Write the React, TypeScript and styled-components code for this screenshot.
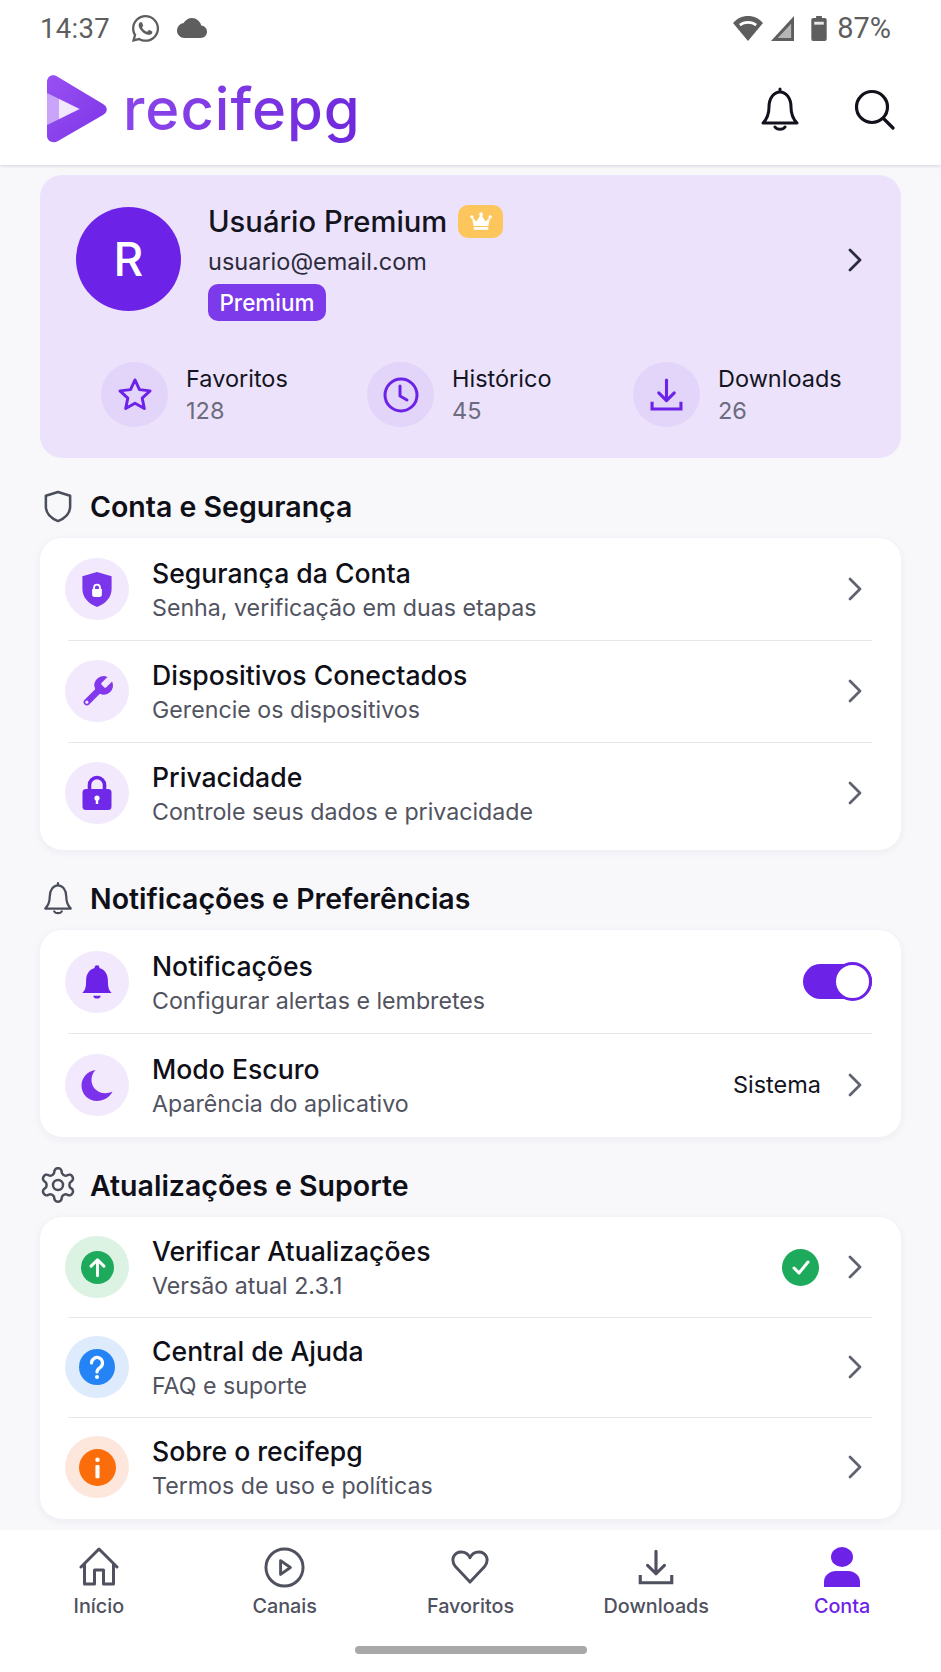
import React from "react";
import styled, { createGlobalStyle } from "styled-components";
import { FaWhatsapp } from "react-icons/fa";
import { MdCloud } from "react-icons/md";

const PURPLE = "#6d22e8";

const GlobalStyle = createGlobalStyle`
  html, body {
    margin: 0;
    padding: 0;
    background: #f8f8fb;
    font-family: "Inter", "Liberation Sans", sans-serif;
  }
  * { box-sizing: border-box; }
`;

const Chevron = ({ color = "#5f6370" }: { color?: string }) => (
  <ChevronSvg viewBox="0 0 14 24" fill="none" stroke={color} strokeWidth="2.8" strokeLinecap="round" strokeLinejoin="round">
    <path d="M2 2l10 10L2 22" />
  </ChevronSvg>
);

const BellOutline = () => (
  <svg viewBox="0 0 40 44" width="100%" height="100%" fill="none" stroke="currentColor" strokeWidth="3" strokeLinecap="round" strokeLinejoin="round">
    <path d="M20 2v3M3 36c4-4 6-8 6-16 0-9 5-15 11-15s11 6 11 15c0 8 2 12 6 16zM15 40c2 3 8 3 10 0" />
  </svg>
);

const SectionBellIcon = () => (
  <SectionBell>
    <BellOutline />
  </SectionBell>
);

const ShieldOutline = () => (
  <svg viewBox="0 0 30 34" width="30" height="33" fill="none" stroke="currentColor" strokeWidth="2.6" strokeLinejoin="round">
    <path d="M15 2l12.5 4v11c0 7-5 12-12.5 15C7.5 29 2.5 24 2.5 17V6z" />
  </svg>
);

const GearOutline = () => (
  <GearSvg viewBox="0 0 24 24" fill="none" stroke="currentColor" strokeWidth="1.5" strokeLinejoin="round" strokeLinecap="round">
    <path d="M12.22 2h-.44a2 2 0 0 0-2 2v.18a2 2 0 0 1-1 1.73l-.43.25a2 2 0 0 1-2 0l-.15-.08a2 2 0 0 0-2.73.73l-.22.38a2 2 0 0 0 .73 2.73l.15.1a2 2 0 0 1 1 1.72v.51a2 2 0 0 1-1 1.74l-.15.09a2 2 0 0 0-.73 2.73l.22.38a2 2 0 0 0 2.73.73l.15-.08a2 2 0 0 1 2 0l.43.25a2 2 0 0 1 1 1.73V20a2 2 0 0 0 2 2h.44a2 2 0 0 0 2-2v-.18a2 2 0 0 1 1-1.73l.43-.25a2 2 0 0 1 2 0l.15.08a2 2 0 0 0 2.73-.73l.22-.39a2 2 0 0 0-.73-2.73l-.15-.08a2 2 0 0 1-1-1.74v-.5a2 2 0 0 1 1-1.74l.15-.09a2 2 0 0 0 .73-2.73l-.22-.38a2 2 0 0 0-2.73-.73l-.15.08a2 2 0 0 1-2 0l-.43-.25a2 2 0 0 1-1-1.73V4a2 2 0 0 0-2-2z" />
    <circle cx="12" cy="12" r="3" />
  </GearSvg>
);

const ShieldLock = () => (
  <svg viewBox="0 0 32 38" width="32" height="37">
    <path fill="#7b35ea" d="M16 1l15 4.5v13C31 27 25 33.5 16 37 7 33.5 1 27 1 18.5v-13z" />
    <path fill="#fff" d="M12 17a4 4 0 0 1 8 0v1.5h1v6c0 1.3-.9 2.3-2.2 2.3h-5.6c-1.3 0-2.2-1-2.2-2.3v-6h1zm2 1.5h4V17a2 2 0 0 0-4 0z" />
  </svg>
);

const WrenchFilled = () => (
  <svg viewBox="0 0 24 24" width="37" height="37">
    <path fill="#8438ee" d="M14.7 6.3a1 1 0 0 0 0 1.4l1.6 1.6a1 1 0 0 0 1.4 0l3.77-3.77a6 6 0 0 1-7.94 7.94l-6.91 6.91a2.12 2.12 0 0 1-3-3l6.91-6.91a6 6 0 0 1 7.94-7.94z" />
    <circle cx="5.1" cy="18.9" r="1" fill="#f3eafd" />
  </svg>
);

const LockFilled = () => (
  <svg viewBox="0 0 30 36" width="30" height="36">
    <path fill="none" stroke="#6d22e8" strokeWidth="3.6" d="M7.5 16V10a7.5 7.5 0 0 1 15 0v6" />
    <rect x="0.5" y="14" width="29" height="21" rx="3.5" fill="#7029e9" />
    <circle cx="15" cy="23" r="2.6" fill="#fff" />
    <rect x="13.8" y="23" width="2.4" height="6" fill="#fff" />
  </svg>
);

const BellFilled = () => (
  <svg viewBox="0 0 32 38" width="32" height="36">
    <circle cx="16" cy="4" r="2.6" fill={PURPLE} />
    <path fill={PURPLE} d="M0.5 30.5c3-2.5 4-6 4-13C4.5 9.5 9.5 4 16 4s11.5 5.5 11.5 13.5c0 7 1 10.5 4 13z" />
    <path fill={PURPLE} d="M12 33.5h8c-.5 4-7.5 4-8 0z" />
  </svg>
);

const MoonFilled = () => (
  <svg viewBox="0 0 32 32" width="32" height="32">
    <path fill="#7c32ea" d="M14.5 1C9 7 9.5 15 14 20c4.5 4.5 11.5 5.5 17.5 2.5C28.5 28.5 22.5 32 16 32 7 32 .5 25 .5 16.5.5 9 6.5 2 14.5 1z" />
  </svg>
);

const BadgeGlyph = ({ color, size, kind }: { color: string; size: number; kind: "up" | "help" | "info" }) => (
  <svg viewBox="0 0 36 36" width={size} height={size}>
    <circle cx="18" cy="18" r="18" fill={color} />
    {kind === "up" && (
      <path d="M18 27V10M11 16.5L18 9.5l7 7" fill="none" stroke="#fff" strokeWidth="3.2" strokeLinecap="round" strokeLinejoin="round" />
    )}
    {kind === "help" && (
      <>
        <path d="M12.5 14a5.5 5.5 0 1 1 8.5 4.6c-2 1.3-3 2.2-3 4.4" fill="none" stroke="#fff" strokeWidth="3.2" strokeLinecap="round" />
        <circle cx="18" cy="28" r="2" fill="#fff" />
      </>
    )}
    {kind === "info" && (
      <>
        <circle cx="18" cy="10.5" r="2.2" fill="#fff" />
        <rect x="16" y="15.5" width="4" height="13" rx="1" fill="#fff" />
      </>
    )}
  </svg>
);

const StarOutline = () => (
  <svg viewBox="0 0 36 36" width="36" height="35" fill="none" stroke={PURPLE} strokeWidth="3" strokeLinejoin="round">
    <path d="M18 3l4.6 10 10.9 1.3-8.1 7.4 2.2 10.8L18 27l-9.6 5.5 2.2-10.8L2.5 14.3 13.4 13z" />
  </svg>
);

const ClockOutline = () => (
  <svg viewBox="0 0 36 36" width="36" height="36" fill="none" stroke={PURPLE} strokeWidth="3" strokeLinecap="round" strokeLinejoin="round">
    <circle cx="18" cy="18" r="16" />
    <path d="M17 9v10l7 4" />
  </svg>
);

const TrayDownload = ({ size, color, weight }: { size: number; color: string; weight: number }) => (
  <svg viewBox="0 0 32 32" width={size} height={size} fill="none" stroke={color} strokeWidth={weight} strokeLinecap="round">
    <path d="M16 2v20M8.5 14.5L16 22l7.5-7.5" strokeLinejoin="round" />
    <path d="M2 23v7h28v-7" strokeLinecap="butt" />
  </svg>
);

const HomeNav = () => (
  <svg viewBox="0 0 40 40" width="40" height="40" fill="none" stroke="currentColor" strokeWidth="3" strokeLinecap="round" strokeLinejoin="round">
    <path d="M2 20L20 2l18 18M5.5 17v20h10V23h9v14h10V17" />
  </svg>
);

const PlayNav = () => (
  <svg viewBox="0 0 42 42" width="41" height="41" fill="none" stroke="currentColor" strokeWidth="3" strokeLinejoin="round">
    <circle cx="21" cy="21" r="19" />
    <path d="M17 14l10 7-10 7z" />
  </svg>
);

const HeartNav = () => (
  <svg viewBox="0 0 40 36" width="40" height="35" fill="none" stroke="currentColor" strokeWidth="3" strokeLinejoin="round">
    <path d="M20 33L5 17C-.5 10 3.5 2 11 2c4.5 0 7.5 2.5 9 6 1.5-3.5 4.5-6 9-6 7.5 0 11.5 8 6 15z" />
  </svg>
);

const PersonNav = () => (
  <svg viewBox="0 0 40 40" width="40" height="40" fill={PURPLE}>
    <ellipse cx="20" cy="10" rx="11" ry="10" />
    <path d="M2 40v-5c0-7 6-11 12-11h12c6 0 12 4 12 11v5z" />
  </svg>
);

const WifiIcon = () => (
  <svg viewBox="0 0 30 25" width="30" height="25">
    <path fill="#5e5e5e" d="M15 25L0 7C4 2.5 9 0 15 0s11 2.5 15 7z" />
    <path fill="#fff" d="M6 8c2.5-2 5.5-3 9-3s6.500 1 9 3l-1.800 2.200C20 8.600 17.600 7.800 15 7.800s-5 .8-7.200 2.400z" />
  </svg>
);

const SignalIcon = () => (
  <svg viewBox="0 0 24 26" width="23" height="25">
    <path fill="#5e5e5e" d="M24 0v26H0z" />
    <path fill="#fff" d="M21 8v15H7z" opacity="0.55" />
  </svg>
);

const BatteryIcon = () => (
  <BatteryBox>
    <svg viewBox="0 0 16 26" width="16" height="25">
      <rect x="5" y="0" width="6" height="3" fill="#5e5e5e" />
      <rect x="0" y="2" width="16" height="24" rx="2" fill="#5e5e5e" />
      <rect x="3" y="6" width="10" height="3" fill="#e8e8e8" />
    </svg>
  </BatteryBox>
);

const LogoMark = () => (
  <svg viewBox="0 0 60 68" width="60" height="68">
    <defs>
      <linearGradient id="logoFill" x1="0" y1="0" x2="1" y2="1">
        <stop offset="0" stopColor="#9a50f2" />
        <stop offset="1" stopColor="#7a35e6" />
      </linearGradient>
    </defs>
    <path fill="url(#logoFill)" d="M0 7c0-6 6-9 11-5l45 27c5 3 5 8 0 11L11 66c-5 3-11 0-11-5z" />
    <path fill="#c9a4f8" d="M0 18l33 16L0 50z" />
    <path fill="#f1e8fe" d="M12 24l20 10-20 10z" />
  </svg>
);

const CrownGlyph = () => (
  <svg viewBox="0 0 24 20" width="22" height="19" fill="#fff">
    <path d="M2 5l5 5 5-8 5 8 5-5-2 10H4z" />
    <rect x="4" y="16" width="16" height="3" rx="1" />
    <circle cx="12" cy="2" r="2" />
    <circle cx="2" cy="5" r="1.8" />
    <circle cx="22" cy="5" r="1.8" />
  </svg>
);

type RowData = {
  title: string;
  sub: string;
  icon: React.ReactNode;
  tint?: string;
  right?: "toggle" | "sistema" | "check";
};

const sections: { name: string; icon: React.ReactNode; rowH: number; pad: number; rows: RowData[] }[] = [
  {
    name: "Conta e Segurança",
    icon: <ShieldOutline />,
    rowH: 102,
    pad: 6,
    rows: [
      { title: "Segurança da Conta", sub: "Senha, verificação em duas etapas", icon: <ShieldLock /> },
      { title: "Dispositivos Conectados", sub: "Gerencie os dispositivos", icon: <WrenchFilled /> },
      { title: "Privacidade", sub: "Controle seus dados e privacidade", icon: <LockFilled /> },
    ],
  },
  {
    name: "Notificações e Preferências",
    icon: <SectionBellIcon />,
    rowH: 103,
    pad: 1,
    rows: [
      { title: "Notificações", sub: "Configurar alertas e lembretes", icon: <BellFilled />, right: "toggle" },
      { title: "Modo Escuro", sub: "Aparência do aplicativo", icon: <MoonFilled />, right: "sistema" },
    ],
  },
  {
    name: "Atualizações e Suporte",
    icon: <GearOutline />,
    rowH: 100,
    pad: 2,
    rows: [
      {
        title: "Verificar Atualizações",
        sub: "Versão atual 2.3.1",
        icon: <BadgeGlyph color="#1eaa5c" size={33} kind="up" />,
        tint: "#dcf3e3",
        right: "check",
      },
      {
        title: "Central de Ajuda",
        sub: "FAQ e suporte",
        icon: <BadgeGlyph color="#2584f5" size={36} kind="help" />,
        tint: "#deebfd",
      },
      {
        title: "Sobre o recifepg",
        sub: "Termos de uso e políticas",
        icon: <BadgeGlyph color="#fb6d0b" size={37} kind="info" />,
        tint: "#fde7dc",
      },
    ],
  },
];

const stats = [
  { label: "Favoritos", value: "128", icon: <StarOutline /> },
  { label: "Histórico", value: "45", icon: <ClockOutline /> },
  { label: "Downloads", value: "26", icon: <TrayDownload size={33} color={PURPLE} weight={3} /> },
];

const navItems = [
  { label: "Início", icon: <HomeNav /> },
  { label: "Canais", icon: <PlayNav /> },
  { label: "Favoritos", icon: <HeartNav /> },
  { label: "Downloads", icon: <TrayDownload size={36} color="currentColor" weight={2.8} /> },
  { label: "Conta", icon: <PersonNav />, active: true },
];

const RowRight = ({ kind }: { kind?: RowData["right"] }) => {
  if (kind === "toggle") {
    return (
      <Toggle>
        <Knob />
      </Toggle>
    );
  }
  return (
    <RightGroup>
      {kind === "sistema" && <RightLabel>Sistema</RightLabel>}
      {kind === "check" && (
        <CheckDot>
          <svg viewBox="0 0 24 24" width="24" height="24" fill="none" stroke="#fff" strokeWidth="3" strokeLinecap="round" strokeLinejoin="round">
            <path d="M5 13l5 5 9-11" />
          </svg>
        </CheckDot>
      )}
      <Chevron />
    </RightGroup>
  );
};

export default function App() {
  return (
    <Page>
      <GlobalStyle />
      <TopArea>
        <StatusBar>
          <StatusLeft>
            <StatusText>14:37</StatusText>
            <FaWhatsapp size={31} color="#5e5e5e" />
            <MdCloud size={30} color="#5e5e5e" />
          </StatusLeft>
          <StatusRight>
            <WifiIcon />
            <SignalIcon />
            <BatteryIcon />
            <BatteryText>87%</BatteryText>
          </StatusRight>
        </StatusBar>
        <Header>
          <Brand>
            <LogoMark />
            <BrandName>recifepg</BrandName>
          </Brand>
          <HeaderActions>
            <HeaderBell>
              <BellOutline />
            </HeaderBell>
            <svg viewBox="0 0 41 41" width="41" height="41" fill="none" stroke="#12121c" strokeWidth="3.2" strokeLinecap="round">
              <circle cx="18" cy="18" r="15.5" />
              <path d="M29.5 29.5L39 39" />
            </svg>
          </HeaderActions>
        </Header>
      </TopArea>

      <Main>
        <ProfileCard>
          <ProfileTop>
            <Avatar>R</Avatar>
            <ProfileInfo>
              <NameRow>
                <Name>Usuário Premium</Name>
                <CrownBadge>
                  <CrownGlyph />
                </CrownBadge>
              </NameRow>
              <Email>usuario@email.com</Email>
              <PlanTag>Premium</PlanTag>
            </ProfileInfo>
            <ProfileChevron>
              <Chevron color="#2b2b3d" />
            </ProfileChevron>
          </ProfileTop>
          <StatsRow>
            {stats.map((s) => (
              <Stat key={s.label}>
                <StatCircle>{s.icon}</StatCircle>
                <div>
                  <StatLabel>{s.label}</StatLabel>
                  <StatValue>{s.value}</StatValue>
                </div>
              </Stat>
            ))}
          </StatsRow>
        </ProfileCard>

        {sections.map((sec) => (
          <Section key={sec.name}>
            <SectionHead>
              <SectionIcon>{sec.icon}</SectionIcon>
              <SectionTitle>{sec.name}</SectionTitle>
            </SectionHead>
            <Card $pad={sec.pad}>
              {sec.rows.map((r) => (
                <Row key={r.title} $h={sec.rowH}>
                  <IconCircle $tint={r.tint}>{r.icon}</IconCircle>
                  <RowText>
                    <RowTitle>{r.title}</RowTitle>
                    <RowSub>{r.sub}</RowSub>
                  </RowText>
                  <RowRight kind={r.right} />
                </Row>
              ))}
            </Card>
          </Section>
        ))}
      </Main>

      <BottomNav>
        <NavRow>
          {navItems.map((n) => (
            <NavItem key={n.label} $active={n.active}>
              <NavIcon>{n.icon}</NavIcon>
              <span>{n.label}</span>
            </NavItem>
          ))}
        </NavRow>
        <HomeBar />
      </BottomNav>
    </Page>
  );
}

const Page = styled.div`
  width: 941px;
  height: 1672px;
  display: flex;
  flex-direction: column;
  overflow: hidden;
  background: #f8f8fb;
`;

const TopArea = styled.div`
  height: 165px;
  flex: none;
  background: #fff;
  box-shadow: 0 1px 3px rgba(30, 30, 60, 0.16);
  position: relative;
  z-index: 1;
`;

const StatusBar = styled.div`
  height: 56px;
  padding: 0 50px 0 40px;
  display: flex;
  align-items: center;
  justify-content: space-between;
`;

const StatusLeft = styled.div`
  display: flex;
  align-items: center;
  gap: 16px;
`;

const StatusRight = styled.div`
  display: flex;
  align-items: center;
  gap: 8px;
`;

const StatusText = styled.span`
  width: 74px;
  font-family: "Roboto", "Liberation Sans", sans-serif;
  font-size: 27.5px;
  color: #5e5e5e;
  letter-spacing: 0.3px;
`;

const BatteryBox = styled.span`
  margin-left: 9px;
  display: flex;
`;

const BatteryText = styled.span`
  margin-left: 2px;
  font-family: "Roboto", "Liberation Sans", sans-serif;
  font-size: 29px;
  color: #5e5e5e;
`;

const Header = styled.div`
  height: 109px;
  padding: 0 46px 3px 47px;
  display: flex;
  align-items: center;
  justify-content: space-between;
`;

const Brand = styled.div`
  display: flex;
  align-items: center;
  gap: 16px;
`;

const BrandName = styled.span`
  font-size: 58px;
  font-weight: 500;
  letter-spacing: 1px;
  line-height: 68px;
  background: linear-gradient(90deg, #8a46ea, #6f28dc);
  -webkit-background-clip: text;
  background-clip: text;
  color: transparent;
`;

const HeaderActions = styled.div`
  display: flex;
  align-items: center;
  gap: 54px;
`;

const HeaderBell = styled.div`
  width: 40px;
  height: 44px;
  color: #12121c;
`;

const SectionBell = styled.div`
  width: 30px;
  height: 34px;
`;

const GearSvg = styled.svg`
  width: 40px;
  height: 40px;
  flex: none;
`;

const Main = styled.main`
  flex: 1;
  min-height: 0;
  padding: 10px 40px 0;
`;

const ProfileCard = styled.section`
  height: 283px;
  padding: 29px 39px 0 36px;
  border-radius: 22px;
  background: #ece2fb;
`;

const ProfileTop = styled.div`
  display: flex;
  align-items: flex-start;
`;

const Avatar = styled.div`
  width: 105px;
  height: 104px;
  margin-top: 3px;
  flex: none;
  border-radius: 50%;
  background: #6d22e8;
  color: #fff;
  font-size: 46px;
  font-weight: 500;
  display: flex;
  align-items: center;
  justify-content: center;
`;

const ProfileInfo = styled.div`
  margin-left: 27px;
  flex: 1;
`;

const NameRow = styled.div`
  display: flex;
  align-items: center;
  gap: 11px;
  height: 34px;
`;

const Name = styled.span`
  font-size: 29.2px;
  font-weight: 500;
  color: #14141f;
`;

const CrownBadge = styled.span`
  width: 45px;
  height: 33px;
  border-radius: 10px;
  background: #fcc65c;
  display: flex;
  align-items: center;
  justify-content: center;
`;

const Email = styled.div`
  margin-top: 8px;
  font-size: 23.5px;
  line-height: 32px;
  color: #2c2c3c;
`;

const PlanTag = styled.div`
  margin-top: 6px;
  width: 118px;
  height: 37px;
  border-radius: 10px;
  background: #7c3aea;
  color: #fff;
  font-size: 22.5px;
  font-weight: 500;
  display: flex;
  align-items: center;
  justify-content: center;
`;

const ProfileChevron = styled.div`
  align-self: center;
  margin-bottom: 5px;
  display: flex;
`;

const StatsRow = styled.div`
  margin-top: 41px;
  padding-left: 25px;
  display: grid;
  grid-template-columns: repeat(3, 266px);
`;

const Stat = styled.div`
  display: flex;
  align-items: center;
  gap: 18px;
`;

const StatCircle = styled.div`
  width: 67px;
  height: 65px;
  flex: none;
  border-radius: 50%;
  background: #e2d5f9;
  display: flex;
  align-items: center;
  justify-content: center;
`;

const StatLabel = styled.div`
  font-size: 23.5px;
  line-height: 32px;
  color: #14141f;
`;

const StatValue = styled.div`
  font-size: 23.5px;
  line-height: 32px;
  color: #6c6c7e;
`;

const Section = styled.section`
  margin-top: 28px;
`;

const SectionHead = styled.div`
  height: 40px;
  margin-bottom: 12px;
  padding-left: 3px;
  display: flex;
  align-items: center;
  gap: 17px;
`;

const SectionIcon = styled.div`
  width: 30px;
  display: flex;
  justify-content: center;
  color: #4a4d5a;
`;

const SectionTitle = styled.h2`
  margin: 0;
  font-size: 28.5px;
  font-weight: 600;
  color: #0f0f18;
`;

const Card = styled.div<{ $pad: number }>`
  padding-bottom: ${(p) => p.$pad}px;
  border-radius: 22px;
  background: #fff;
  box-shadow: 0 2px 8px rgba(40, 30, 80, 0.06);
`;

const Row = styled.div<{ $h: number }>`
  position: relative;
  height: ${(p) => p.$h}px;
  padding: 0 29px 0 25px;
  display: flex;
  align-items: center;

  & + &::before {
    content: "";
    position: absolute;
    top: 0;
    left: 28px;
    right: 29px;
    height: 1px;
    background: #e6e6ec;
  }
`;

const IconCircle = styled.div<{ $tint?: string }>`
  width: 64px;
  height: 62px;
  flex: none;
  border-radius: 50%;
  background: ${(p) => p.$tint || "#f2e9fd"};
  display: flex;
  align-items: center;
  justify-content: center;
`;

const RowText = styled.div`
  margin-left: 23px;
  padding-top: 2px;
  flex: 1;
`;

const RowTitle = styled.div`
  font-size: 26.6px;
  font-weight: 500;
  line-height: 36px;
  color: #0f0f18;
`;

const RowSub = styled.div`
  font-size: 23.2px;
  line-height: 34px;
  color: #51535f;
`;

const RightGroup = styled.div`
  display: flex;
  align-items: center;
  padding-right: 10px;
`;

const RightLabel = styled.span`
  margin-right: 27px;
  font-size: 23.5px;
  color: #14141f;
`;

const CheckDot = styled.span`
  width: 37px;
  height: 37px;
  margin-right: 29px;
  border-radius: 50%;
  background: #1eaa5c;
  display: flex;
  align-items: center;
  justify-content: center;
`;

const ChevronSvg = styled.svg`
  width: 14px;
  height: 24px;
  display: block;
`;

const Toggle = styled.div`
  width: 69px;
  height: 35px;
  border-radius: 18px;
  background: #6d22e8;
  display: flex;
  align-items: center;
  justify-content: flex-end;
`;

const Knob = styled.div`
  width: 39px;
  height: 39px;
  border-radius: 50%;
  background: #fff;
  border: 3px solid #6d22e8;
`;

const BottomNav = styled.nav`
  height: 142px;
  flex: none;
  background: #fff;
  display: flex;
  flex-direction: column;
  align-items: center;
  position: relative;
`;

const NavRow = styled.div`
  width: 100%;
  padding: 17px 6px 0 6px;
  display: grid;
  grid-template-columns: repeat(5, 1fr);
`;

const NavItem = styled.div<{ $active?: boolean }>`
  display: flex;
  flex-direction: column;
  align-items: center;
  gap: 5px;
  font-size: 19.8px;
  font-weight: 500;
  line-height: 28px;
  color: ${(p) => (p.$active ? "#6d22e8" : "#4f515e")};
`;

const NavIcon = styled.div`
  height: 40px;
  display: flex;
  align-items: center;
`;

const HomeBar = styled.div`
  width: 232px;
  height: 8px;
  margin-top: 26px;
  border-radius: 4px;
  background: #a8a8a8;
`;
